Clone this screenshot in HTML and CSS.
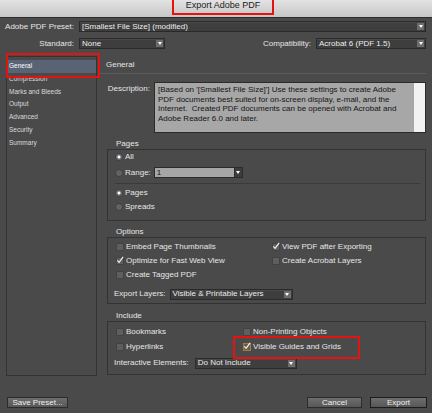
FILE: index.html
```html
<!DOCTYPE html>
<html lang="en">
<head>
    <meta charset="UTF-8">
    <meta name="viewport" content="width=device-width, initial-scale=1.0">
    <title>Export Adobe PDF</title>
    <link rel="stylesheet" href="styles.css">
</head>
<body>
    <div class="titlebar">
        <span class="title">Export Adobe PDF</span>
    </div>

    <div class="top-row row-preset">
        <span class="row-label">Adobe PDF Preset:</span>
        <div class="select select-preset">
            <span>[Smallest File Size] (modified)</span>
            <span class="arrow"></span>
        </div>
    </div>
    <div class="top-row row-standard">
        <span class="row-label">Standard:</span>
        <div class="select select-standard">
            <span>None</span>
            <span class="arrow"></span>
        </div>
        <span class="compat-label">Compatibility:</span>
        <div class="select select-compat">
            <span>Acrobat 6 (PDF 1.5)</span>
            <span class="arrow"></span>
        </div>
    </div>

    <div class="main">
        <div class="sidebar-wrap">
            <ul class="sidebar">
                <li class="active">General</li>
                <li>Compression</li>
                <li>Marks and Bleeds</li>
                <li>Output</li>
                <li>Advanced</li>
                <li>Security</li>
                <li>Summary</li>
            </ul>
            <!-- red annotation box -->
            <div class="callout-nav"></div>
        </div>

        <div class="content">
            <div class="section-title">General</div>

            <div class="desc-row">
                <span class="desc-label">Description:</span>
                <div class="desc-box">
                    <p>[Based on '[Smallest File Size]'] Use these settings to create Adobe<br>PDF documents best suited for on-screen display, e-mail, and the<br>Internet.&nbsp; Created PDF documents can be opened with Acrobat and<br>Adobe Reader 6.0 and later.</p>
                    <div class="desc-scroll"></div>
                </div>
            </div>

            <div class="group-label">Pages</div>
            <div class="group group-pages">
                <div class="radio-row"><span class="radio on"></span>All</div>
                <div class="radio-row range-row">
                    <span class="radio"></span>Range:
                    <div class="combo">
                        <span class="combo-field">1</span>
                        <span class="combo-btn"></span>
                    </div>
                </div>
                <div class="separator"></div>
                <div class="radio-row pages-row"><span class="radio on"></span>Pages</div>
                <div class="radio-row"><span class="radio"></span>Spreads</div>
            </div>

            <div class="group-label">Options</div>
            <div class="group group-options">
                <div class="check-grid options-grid">
                    <div class="cell"><span class="check"></span>Embed Page Thumbnails</div>
                    <div class="cell"><span class="check on"><svg viewBox="0 0 9 9"><path d="M1.5 5 L3.5 7.2 L8 1"/></svg></span>View PDF after Exporting</div>
                    <div class="cell"><span class="check on"><svg viewBox="0 0 9 9"><path d="M1.5 5 L3.5 7.2 L8 1"/></svg></span>Optimize for Fast Web View</div>
                    <div class="cell"><span class="check"></span>Create Acrobat Layers</div>
                    <div class="cell"><span class="check"></span>Create Tagged PDF</div>
                </div>
                <div class="field-row">
                    <span class="field-label">Export Layers:</span>
                    <div class="select select-layers">
                        <span>Visible &amp; Printable Layers</span>
                        <span class="arrow"></span>
                    </div>
                </div>
            </div>

            <div class="group-label include-label">Include</div>
            <div class="group group-include">
                <div class="check-grid include-grid">
                    <div class="cell"><span class="check"></span>Bookmarks</div>
                    <div class="cell"><span class="check"></span>Non-Printing Objects</div>
                    <div class="cell"><span class="check"></span>Hyperlinks</div>
                    <div class="cell marked"><span class="check on focus"><svg viewBox="0 0 9 9"><path d="M1.5 5 L3.5 7.2 L8 1"/></svg></span>Visible Guides and Grids</div>
                </div>
                <div class="field-row interactive-row">
                    <span class="field-label">Interactive Elements:</span>
                    <div class="select select-interactive">
                        <span>Do Not Include</span>
                        <span class="arrow"></span>
                    </div>
                </div>
            </div>
        </div>
    </div>

    <div class="footer">
        <button class="btn btn-save">Save Preset...</button>
        <button class="btn btn-cancel">Cancel</button>
        <button class="btn btn-export">Export</button>
    </div>
</body>
</html>
```

FILE: styles.css
```css
/* Export Adobe PDF dialog, dark UI */
:root {
    --bg: #4a4a4a;
    --text: #e6e6e6;
    --border-dark: #333333;
    --field-bg: #3e3e3e;
    --annotation: #e3140f;
}
* {
    box-sizing: border-box;
}
html, body {
    margin: 0;
    padding: 0;
}
body {
    width: 432px;
    height: 413px;
    overflow: hidden;
    background-color: var(--bg);
    color: var(--text);
    font-family: "Liberation Sans", Arial, sans-serif;
    font-size: 8px;
    line-height: 10px;
}

/* Title bar */
.titlebar {
    height: 18px;
    display: flex;
    justify-content: center;
    background: linear-gradient(#e3e3e3, #c6c6c6);
    border-bottom: 1px solid #2c2c2c;
}
.title {
    width: 102px;
    height: 15px;
    margin-left: 14px;
    border: 2px solid var(--annotation);
    border-top: none;
    color: #222;
    font-size: 9px;
    line-height: 11px;
    text-align: center;
}

/* Preset / standard rows */
.top-row {
    display: flex;
    align-items: center;
    padding-right: 6px;
}
.row-preset {
    margin-top: 3px;
}
.row-standard {
    margin-top: 6px;
}
.row-label {
    width: 79px;
    padding-right: 5px;
    text-align: right;
}
.compat-label {
    margin-left: auto;
    margin-right: 5px;
}

/* Dropdowns */
.select {
    height: 11px;
    display: flex;
    align-items: center;
    padding-left: 2px;
    background-color: var(--field-bg);
    border: 1px solid #2a2a2a;
    box-shadow: inset 0 1px 0 #4a4a4a;
    color: #ececec;
    white-space: nowrap;
}
.select .arrow {
    width: 7px;
    height: 7px;
    margin-left: auto;
    margin-right: 1px;
    display: flex;
    align-items: center;
    justify-content: center;
    background-color: #6c6c6c;
}
.select .arrow::before,
.combo-btn::before {
    content: "";
    border-left: 2px solid transparent;
    border-right: 2px solid transparent;
    border-top: 3px solid #fff;
}
.select-preset {
    flex: 1;
}
.select-standard {
    width: 86px;
}
.select-compat {
    width: 110px;
}

/* Main area */
.main {
    display: flex;
    margin-top: 4px;
    height: 323px;
}
.sidebar-wrap {
    position: relative;
    width: 91px;
    margin-left: 6px;
    padding-top: 3px;
}
.sidebar {
    list-style: none;
    margin: 0;
    padding: 3px 0 0;
    height: 320px;
    border: 1px solid var(--border-dark);
    font-size: 6.5px;
}
.sidebar li {
    height: 12.8px;
    line-height: 12.8px;
    padding-left: 2px;
    color: #dadada;
    white-space: nowrap;
}
.sidebar li.active {
    background-color: #5a6374;
    color: #fff;
}
.callout-nav {
    position: absolute;
    top: 0;
    left: 0;
    width: 94px;
    height: 25px;
    border: 2px solid var(--annotation);
}

.content {
    width: 326px;
    margin-left: 3px;
}
.section-title {
    height: 21px;
    padding: 7px 0 0 6px;
    border-bottom: 1px solid #5c5c5c;
}

/* Description */
.desc-row {
    display: flex;
    margin-top: 8px;
}
.desc-label {
    width: 54px;
    padding: 2px 4px 0 0;
    text-align: right;
}
.desc-box {
    flex: 1;
    height: 51px;
    display: flex;
    background-color: #a7a7a7;
    border: 1px solid #2b2b2b;
    color: #151515;
}
.desc-box p {
    flex: 1;
    margin: 0;
    padding: 2px 3px;
    line-height: 9.7px;
    white-space: nowrap;
}
.desc-scroll {
    width: 11px;
    background-color: #f2f2f2;
}

/* Groups */
.group-label {
    height: 10px;
    margin: 6px 0 0 16px;
}
.include-label {
    margin-top: 7px;
}
.group {
    margin-left: 7px;
    border: 1px solid var(--border-dark);
}
.group-pages {
    padding-bottom: 6px;
}
.group-options {
    padding: 2px 0;
}
.group-include {
    padding: 2px 0 4px;
}

.radio-row {
    height: 14px;
    display: flex;
    align-items: center;
}
.range-row {
    height: 17px;
}
.pages-row {
    margin-top: 2px;
}
.radio {
    width: 6px;
    height: 6px;
    margin: 0 3px 0 8px;
    border-radius: 50%;
    background-color: #626262;
    box-shadow: 0 0 0 0.5px #3a3a3a;
}
.radio.on {
    background: radial-gradient(circle, #fff 0, #fff 1.2px, #6a6a6a 1.8px);
}
.combo {
    width: 89px;
    height: 11px;
    margin-left: 3px;
    display: flex;
}
.combo-field {
    flex: 1;
    padding-left: 2px;
    background-color: #a6a6a6;
    border: 1px solid #2b2b2b;
    color: #111;
    line-height: 9px;
}
.combo-btn {
    width: 8px;
    display: flex;
    align-items: center;
    justify-content: center;
    background-color: #3d3d3d;
    border: 1px solid #2b2b2b;
    border-left: none;
}
.separator {
    height: 1px;
    margin: 2px 5px 0 7px;
    background-color: #3a3a3a;
}

/* Checkboxes */
.check-grid {
    display: grid;
}
.options-grid {
    grid-template-columns: 156px 1fr;
    grid-auto-rows: 14px;
}
.include-grid {
    grid-template-columns: 127px 1fr;
    grid-auto-rows: 15px;
}
.cell {
    position: relative;
    display: flex;
    align-items: center;
    white-space: nowrap;
}
.check {
    width: 6px;
    height: 6px;
    margin: 0 3px 0 9px;
    background-color: #5e5e5e;
    box-shadow: 0 0 0 0.5px #3a3a3a;
}
.check svg {
    display: block;
    width: 8px;
    height: 8px;
    margin: -2px 0 0 -1px;
    overflow: visible;
}
.check svg path {
    fill: none;
    stroke: #f4f4f4;
    stroke-width: 1.3;
}
.check.focus {
    box-shadow: 0 0 0 1px #b5782a;
}
.cell.marked::after {
    content: "";
    position: absolute;
    top: -3px;
    left: -2px;
    width: 123px;
    height: 19px;
    border: 2px solid var(--annotation);
}

.field-row {
    height: 14px;
    margin-top: 5px;
    display: flex;
    align-items: center;
}
.interactive-row {
    margin-top: 2px;
}
.field-label {
    margin-left: 6px;
}
.select-layers {
    width: 123px;
    margin-left: 4px;
}
.select-interactive {
    width: 102px;
    margin-left: 6px;
}

/* Footer buttons */
.footer {
    display: flex;
    padding: 21px 5px 0 7px;
}
.btn {
    height: 11px;
    padding: 0;
    background: linear-gradient(#6e6e6e, #575757);
    border: 1px solid #2c2c2c;
    color: #f0f0f0;
    font-family: "Liberation Sans", Arial, sans-serif;
    font-size: 8px;
    line-height: 9px;
}
.btn-save {
    width: 61px;
}
.btn-cancel {
    width: 55px;
    margin-left: auto;
}
.btn-export {
    width: 57px;
    margin-left: 8px;
    border-color: #1c1c1c;
}
```
